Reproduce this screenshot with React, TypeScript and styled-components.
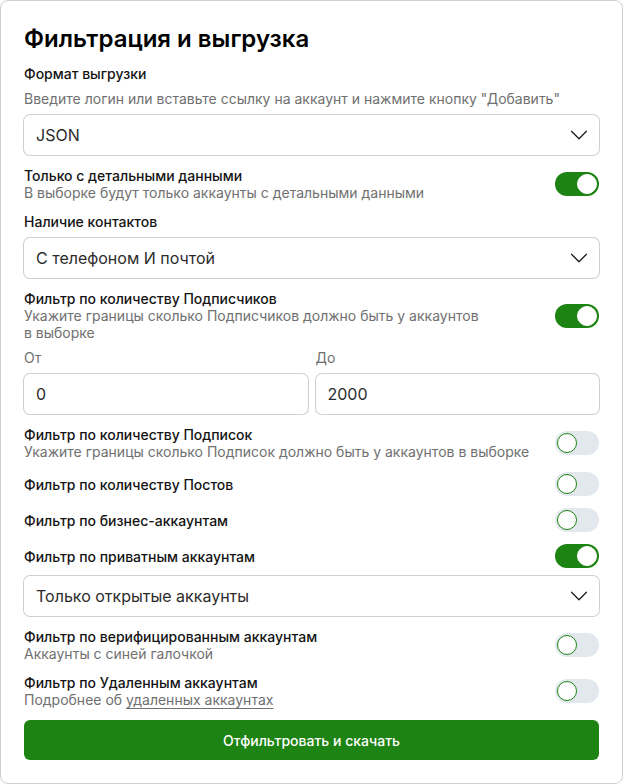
import React, { useState } from "react";
import styled, { createGlobalStyle } from "styled-components";

type SwitchRowProps = {
  id: string;
  title: string;
  hint?: React.ReactNode;
  checked: boolean;
  onToggle: (id: string) => void;
};

const SwitchRow: React.FC<SwitchRowProps> = ({
  id,
  title,
  hint,
  checked,
  onToggle,
}) => (
  <Row>
    <RowText>
      <Label htmlFor={id}>{title}</Label>
      {hint && <Hint>{hint}</Hint>}
    </RowText>
    <Switch
      id={id}
      type="checkbox"
      role="switch"
      checked={checked}
      onChange={() => onToggle(id)}
    />
  </Row>
);

type SelectFieldProps = {
  id: string;
  label?: string;
  options: string[];
};

const SelectField: React.FC<SelectFieldProps> = ({ id, label, options }) => (
  <SelectWrapper>
    <Select id={id} aria-label={label}>
      {options.map((option) => (
        <option key={option}>{option}</option>
      ))}
    </Select>
    <Chevron viewBox="0 0 16 16" aria-hidden="true">
      <path d="M0.5 4.2L8 11.7L15.5 4.2" />
    </Chevron>
  </SelectWrapper>
);

const App: React.FC = () => {
  const [from, setFrom] = useState<string>("0");
  const [to, setTo] = useState<string>("2000");
  const [filters, setFilters] = useState<Record<string, boolean>>({
    detailed: true,
    followers: true,
    following: false,
    posts: false,
    business: false,
    private: true,
    verified: false,
    deleted: false,
  });

  const handleToggle = (id: string) => {
    setFilters({ ...filters, [id]: !filters[id] });
  };

  const handleSubmit = (e: React.FormEvent) => {
    e.preventDefault();
  };

  return (
    <>
      <GlobalStyle />
      <Card onSubmit={handleSubmit}>
        <Title>Фильтрация и выгрузка</Title>
        <Group>
          <Label htmlFor="format">Формат выгрузки</Label>
          <Hint>
            Введите логин или вставьте ссылку на аккаунт и нажмите кнопку
            "Добавить"
          </Hint>
          <SelectField id="format" options={["JSON", "CSV", "XLSX"]} />
        </Group>
        <SwitchRow
          id="detailed"
          title="Только с детальными данными"
          hint="В выборке будут только аккаунты с детальными данными"
          checked={filters.detailed}
          onToggle={handleToggle}
        />
        <Group>
          <Label htmlFor="contacts">Наличие контактов</Label>
          <SelectField
            id="contacts"
            options={["С телефоном И почтой", "С телефоном", "С почтой"]}
          />
        </Group>
        <Group>
          <SwitchRow
            id="followers"
            title="Фильтр по количеству Подписчиков"
            hint={
              "Укажите границы сколько Подписчиков должно быть у аккаунтов в\u00a0выборке"
            }
            checked={filters.followers}
            onToggle={handleToggle}
          />
          {filters.followers && (
            <Range>
              <Group>
                <HintLabel htmlFor="from">От</HintLabel>
                <Input
                  id="from"
                  type="text"
                  value={from}
                  onChange={(e) => setFrom(e.target.value)}
                />
              </Group>
              <Group>
                <HintLabel htmlFor="to">До</HintLabel>
                <Input
                  id="to"
                  type="text"
                  value={to}
                  onChange={(e) => setTo(e.target.value)}
                />
              </Group>
            </Range>
          )}
        </Group>
        <SwitchRow
          id="following"
          title="Фильтр по количеству Подписок"
          hint={
            "Укажите границы сколько Подписок должно быть у аккаунтов в\u00a0выборке"
          }
          checked={filters.following}
          onToggle={handleToggle}
        />
        <SwitchRow
          id="posts"
          title="Фильтр по количеству Постов"
          checked={filters.posts}
          onToggle={handleToggle}
        />
        <SwitchRow
          id="business"
          title="Фильтр по бизнес-аккаунтам"
          checked={filters.business}
          onToggle={handleToggle}
        />
        <Group>
          <SwitchRow
            id="private"
            title="Фильтр по приватным аккаунтам"
            checked={filters.private}
            onToggle={handleToggle}
          />
          {filters.private && (
            <SelectField
              id="privacy"
              label="Фильтр по приватным аккаунтам"
              options={["Только открытые аккаунты", "Только закрытые аккаунты"]}
            />
          )}
        </Group>
        <SwitchRow
          id="verified"
          title="Фильтр по верифицированным аккаунтам"
          hint="Аккаунты с синей галочкой"
          checked={filters.verified}
          onToggle={handleToggle}
        />
        <SwitchRow
          id="deleted"
          title="Фильтр по Удаленным аккаунтам"
          hint={
            <>
              Подробнее об <HintLink href="#deleted">удаленных аккаунтах</HintLink>
            </>
          }
          checked={filters.deleted}
          onToggle={handleToggle}
        />
        <SubmitButton type="submit">Отфильтровать и скачать</SubmitButton>
      </Card>
    </>
  );
};

const GlobalStyle = createGlobalStyle`
  *,
  *::before {
    box-sizing: border-box;
  }

  body {
    margin: 0;
    background-color: #ffffff;
    font-family: Inter, "Liberation Sans", sans-serif;
    font-size: 14px;
    line-height: 17px;
  }
`;

const Card = styled.form`
  display: flex;
  flex-direction: column;
  gap: 12px;
  padding: 23px;
  border: 1px solid #cfcfcf;
  border-radius: 8px;
`;

const Title = styled.h1`
  margin: 0;
  color: #000000;
  font-size: 24px;
  font-weight: 600;
  line-height: 29px;
`;

const Group = styled.div`
  display: flex;
  flex-direction: column;
  gap: 8px;
`;

const Range = styled.div`
  display: grid;
  grid-template-columns: 1fr 1fr;
  gap: 8px;
`;

const Row = styled.div`
  display: flex;
  align-items: center;
  justify-content: space-between;
  gap: 12px;
`;

const RowText = styled.div`
  display: flex;
  flex-direction: column;
`;

const Label = styled.label`
  color: #141414;
  font-weight: 500;
`;

const Hint = styled.p`
  margin: 0;
  color: #707070;
`;

const HintLabel = styled.label`
  color: #707070;
`;

const HintLink = styled.a`
  color: inherit;
  text-decoration: underline;
  text-underline-offset: 3px;
`;

const Input = styled.input`
  width: 100%;
  height: 40px;
  padding: 0 12px;
  border: none;
  border-radius: 6px;
  box-shadow: 0 0 0 1px #cfcfd2;
  background-color: #ffffff;
  color: #2b2b2b;
  font-family: inherit;
  font-size: 16px;
`;

const Select = styled(Input).attrs({ as: "select" })`
  display: block;
  padding-right: 40px;
  appearance: none;
  cursor: pointer;
`;

const SelectWrapper = styled.div`
  position: relative;
`;

const Chevron = styled.svg`
  position: absolute;
  top: 12px;
  right: 12px;
  width: 16px;
  height: 16px;
  fill: none;
  stroke: #1c1c1c;
  stroke-width: 1.3;
  stroke-linecap: round;
  stroke-linejoin: round;
  pointer-events: none;
`;

const Switch = styled.input`
  flex-shrink: 0;
  width: 44px;
  height: 24px;
  margin: 0;
  padding: 2px;
  border-radius: 12px;
  background-color: #e3e7ee;
  appearance: none;
  cursor: pointer;

  &::before {
    content: "";
    display: block;
    width: 20px;
    height: 20px;
    border: 1px solid #1d8313;
    border-radius: 50%;
    background-color: #ffffff;
  }

  &:checked {
    background-color: #1d8313;
  }

  &:checked::before {
    margin-left: 20px;
    border-color: #ffffff;
  }
`;

const SubmitButton = styled.button`
  height: 40px;
  border: none;
  border-radius: 6px;
  background-color: #1d8313;
  color: #ffffff;
  font-family: inherit;
  font-size: 14px;
  font-weight: 500;
  cursor: pointer;
`;

export default App;
